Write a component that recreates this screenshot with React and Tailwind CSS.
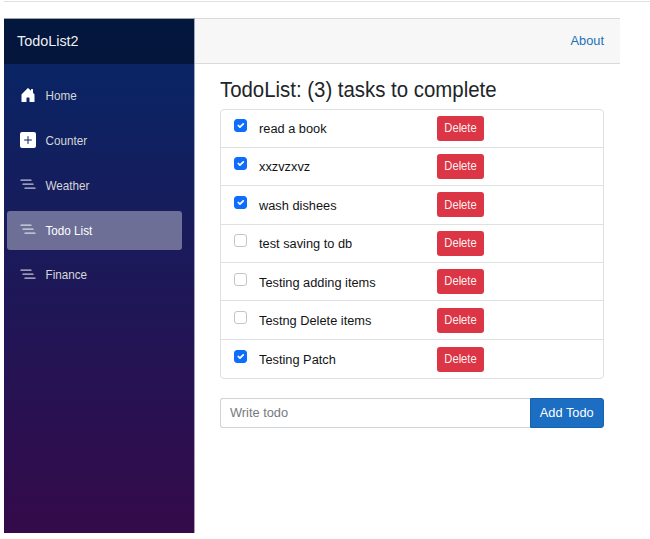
import React from "react";

const todos = [
  { title: "read a book", done: true },
  { title: "xxzvzxvz", done: true },
  { title: "wash dishees", done: true },
  { title: "test saving to db", done: false },
  { title: "Testing adding items", done: false },
  { title: "Testng Delete items", done: false },
  { title: "Testing Patch", done: true },
];

function HomeIcon() {
  return (
    <svg viewBox="0 0 16 16" className="size-4 text-white" fill="currentColor">
      <path d="M6.5 14.5v-3.505c0-.245.25-.495.5-.495h2c.25 0 .5.25.5.5v3.5a.5.5 0 0 0 .5.5h4a.5.5 0 0 0 .5-.5v-7a.5.5 0 0 0-.146-.354L13 5.793V2.5a.5.5 0 0 0-.5-.5h-1a.5.5 0 0 0-.5.5v1.293L8.354 1.146a.5.5 0 0 0-.708 0l-6 6A.5.5 0 0 0 1.5 7.5v7a.5.5 0 0 0 .5.5h4a.5.5 0 0 0 .5-.5Z" />
    </svg>
  );
}

function PlusIcon() {
  return (
    <svg viewBox="0 0 16 16" className="size-4 text-white" fill="currentColor">
      <path d="M2 0a2 2 0 0 0-2 2v12a2 2 0 0 0 2 2h12a2 2 0 0 0 2-2V2a2 2 0 0 0-2-2H2zm6.5 4.5v3h3a.5.5 0 0 1 0 1h-3v3a.5.5 0 0 1-1 0v-3h-3a.5.5 0 0 1 0-1h3v-3a.5.5 0 0 1 1 0z" />
    </svg>
  );
}

function ListIcon() {
  return (
    <svg viewBox="0 0 16 16" className="size-4 text-white/75" fill="none" stroke="currentColor" strokeWidth="1.3" strokeLinecap="round">
      <path d="M5 11.2h10M3 7.2h10M1 3.2h10" />
    </svg>
  );
}

const links = [
  { label: "Home", Icon: HomeIcon },
  { label: "Counter", Icon: PlusIcon },
  { label: "Weather", Icon: ListIcon },
  { label: "Todo List", Icon: ListIcon, active: true },
  { label: "Finance", Icon: ListIcon },
];

// Label stretched slightly on the vertical axis.
function Tall({ children }) {
  return <span className="inline-block origin-center scale-y-[1.07]">{children}</span>;
}

function Checkbox({ done }) {
  return (
    <span
      className={
        "flex size-[13px] items-center justify-center rounded-[3px] border " +
        (done ? "border-[#0d6efd] bg-[#0d6efd]" : "border-[#c3c5c8] bg-white")
      }
    >
      {done && (
        <svg viewBox="0 0 20 20" className="size-[11px] shrink-0" fill="none" stroke="#fff" strokeWidth="3.2" strokeLinecap="round" strokeLinejoin="round">
          <path d="m6 10 3 3 6-6" />
        </svg>
      )}
    </span>
  );
}

export default function App() {
  return (
    <div className="h-[539px] w-[650px] overflow-hidden bg-white pl-1 font-['Liberation_Sans',Arial,sans-serif] text-[#212529]">
      <div className="mt-px h-px bg-[#dfe0e0]" />
      <div className="mt-4 flex h-[515px] w-[616px]">
        <aside className="flex w-[191px] shrink-0 flex-col border-r border-white/60 bg-[linear-gradient(180deg,#052767_0%,#340a4a_100%)]">
          <div className="flex h-[46px] items-center border-t border-[#9ba3af] bg-black/40 pl-[13px] text-[14.4px] text-white/95">
            <Tall>TodoList2</Tall>
          </div>
          <nav className="flex flex-col gap-[6px] pt-[13px] pr-[12px] pl-[3px]">
            {links.map(({ label, Icon, active }) => (
              <a
                key={label}
                className={
                  "flex h-[38.8px] items-center rounded-[3px] pb-[2px] pl-[13px] text-[11.7px] " +
                  (active ? "bg-white/37 text-white" : "text-[#d7d7d7]")
                }
              >
                <Icon />
                <span className="ml-[9.5px] pt-px"><Tall>{label}</Tall></span>
              </a>
            ))}
          </nav>
        </aside>
        <main className="flex-1">
          <div className="flex h-[46px] items-center justify-end border-y border-[#d9dadb] bg-[#f7f7f7] pr-4 text-[12.8px] text-[#1b72b8]">
            <Tall>About</Tall>
          </div>
          <div className="flex flex-col pr-[16px] pl-[25px]">
            <h3 className="mt-[14px] h-[30.5px] text-[20.4px] leading-[24px] whitespace-nowrap">
              <Tall>TodoList: (3) tasks to complete</Tall>
            </h3>
            <ul className="rounded-[4px] border border-[#dee0e2] text-[12.8px] text-[#111416]">
              {todos.map((t) => (
                <li key={t.title} className="flex h-[38.4px] items-center border-b border-[#dee0e2] pl-[12.5px] last:border-b-0">
                  <span className="mb-[5.5px]"><Checkbox done={t.done} /></span>
                  <span className="ml-[12.5px] w-[178px] pt-px"><Tall>{t.title}</Tall></span>
                  <button className="h-[25px] w-[47px] rounded-[3px] bg-[#dc3545] text-[11.2px] text-white/95"><Tall>Delete</Tall></button>
                </li>
              ))}
            </ul>
            <div className="mt-[18.5px] flex h-[30.5px] text-[12.8px]">
              <div className="flex flex-1 items-center rounded-l-[3px] border border-r-0 border-[#ced4da] pb-px pl-[9px] text-[#747b81]">
                <Tall>Write todo</Tall>
              </div>
              <button className="w-[74.5px] rounded-r-[3px] border border-[#1861ac] bg-[#1b6ec2] pb-px text-white"><Tall>Add Todo</Tall></button>
            </div>
          </div>
        </main>
      </div>
    </div>
  );
}
